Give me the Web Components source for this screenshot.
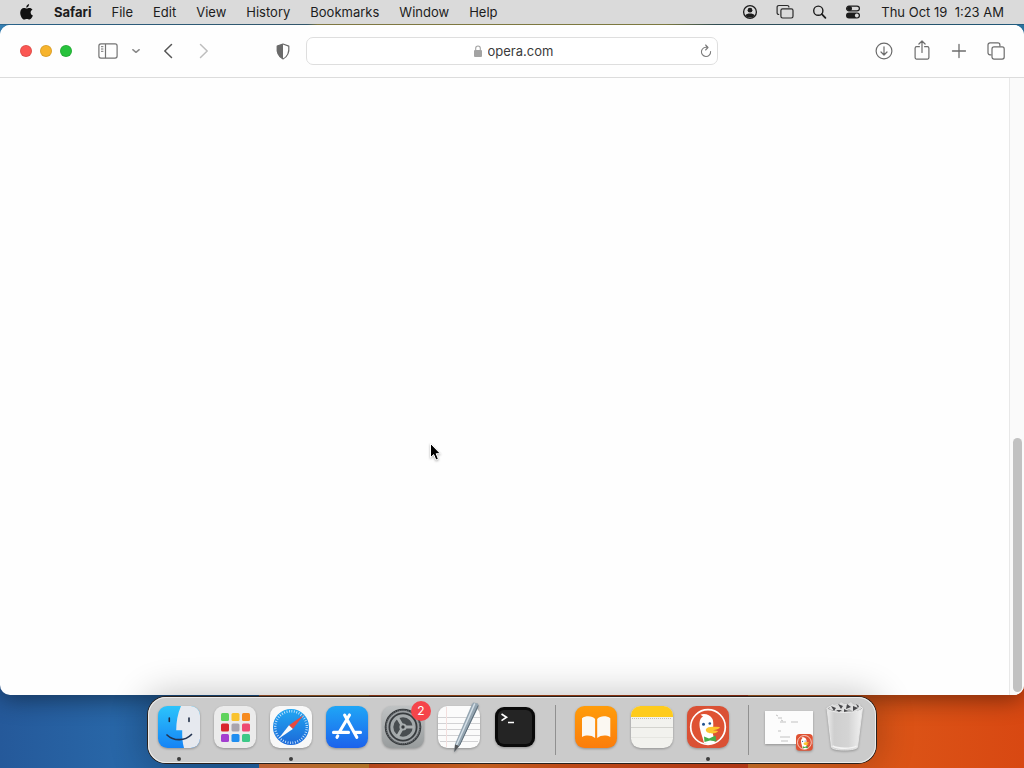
<!DOCTYPE html>
<html lang="en">
<head>
<meta charset="utf-8">
<title>Desktop</title>
<style>
html, body { margin: 0; height: 100%; }
body { font-family: Inter, "Liberation Sans", sans-serif; font-size: 13px; line-height: 16px; color: #1c1c1c; overflow: hidden; }
</style>
</head>
<body>
<mac-desktop>
  <mac-menubar slot="menu"></mac-menubar>
  <browser-window slot="window" address="opera.com"></browser-window>
  <mac-dock slot="dock"></mac-dock>
</mac-desktop>

<script>
function define(name, html, setup) {
  const template = document.createElement('template');
  template.innerHTML = html;
  customElements.define(name, class extends HTMLElement {
    constructor() {
      super();
      this.attachShadow({ mode: 'open' }).append(template.content.cloneNode(true));
    }
    connectedCallback() { if (setup) setup(this, this.shadowRoot); }
  });
}

const button = `button { all: unset; display: flex; align-items: center; justify-content: center; flex: none; }
svg { display: block; flex: none; overflow: visible; }`;

define('mac-desktop', `
<style>
:host {
  display: flex; flex-direction: column; height: 100vh; position: relative; overflow: hidden;
  background:
    linear-gradient(90deg, #3c8cc4 0, #4a7f9c 30%, #b9ae62 31%, #b5b15c 65%, #47707a 70%, #2f7fb0 100%) top / 100% 60px no-repeat,
    linear-gradient(90deg, #25599a 0, #2866a7 11%, #22609f 22%, #2364a6 25.3%, #d8703c 25.3%, #c8822c 36%, #cd5020 36%, #dc6c24 47%, #d8551c 55%, #c63e18 73%, #d27428 73%, #df6520 79%, #dc5517 86%, #d84812 100%);
}
.cursor { position: absolute; left: 429px; top: 442px; z-index: 2; filter: drop-shadow(0 1px 1px rgba(0,0,0,.3)); }
</style>
<slot name="menu"></slot>
<slot name="window"></slot>
<slot name="dock"></slot>
<svg class="cursor" width="13" height="20" viewBox="0 0 13 20" aria-hidden="true"><path d="M1.5 1.5V15.6L4.7 12.6L6.9 18L9.4 17L7.2 11.7H11.4Z" fill="#000" stroke="#fff" stroke-width="1"/></svg>
`);

define('menu-item', `
<style>
:host { display: block; }
${button}
button { height: 24px; }
:host([strong]) button { font-weight: 700; }
</style>
<button><slot></slot></button>
`);

define('mac-menubar', `
<style>
:host { display: flex; justify-content: space-between; align-items: center; flex: none; height: 24px; padding: 0 20px; background: #dadada; box-shadow: 0 1px rgba(0,0,0,.18); z-index: 1; }
nav, .status { display: flex; align-items: center; }
nav { gap: 20px; }
.status { gap: 18px; }
${button}
time { white-space: pre; padding-left: 2px; }
</style>
<nav aria-label="Menu">
  <button aria-label="Apple"><svg width="14" height="16" viewBox="0 0 14 16"><path fill="#111" d="M9.1.1C9.2 1.9 7.9 3.6 6.3 3.7 6.1 2 7.5.3 9.1.1ZM6.7 4.6C7.4 4.6 8.3 3.9 9.5 3.9 10.7 3.9 11.8 4.5 12.5 5.4 9.8 7 10.2 10.4 12.9 11.5 12.3 13.2 11 15.4 9.6 15.5 8.6 15.6 8.2 14.9 6.9 14.9 5.6 14.9 5.2 15.5 4.2 15.6 2.5 15.6.2 11.9.2 8.7.2 5.6 2.1 4 3.9 4 5.2 4 6.1 4.6 6.7 4.6Z"/></svg></button>
  <menu-item strong>Safari</menu-item>
  <menu-item>File</menu-item>
  <menu-item>Edit</menu-item>
  <menu-item>View</menu-item>
  <menu-item>History</menu-item>
  <menu-item>Bookmarks</menu-item>
  <menu-item>Window</menu-item>
  <menu-item>Help</menu-item>
</nav>
<div class="status">
  <button aria-label="User"><svg width="16" height="16" viewBox="0 0 16 16"><circle cx="8" cy="8" r="6.4" fill="none" stroke="#1c1c1c" stroke-width="1.3"/><circle cx="8" cy="6.2" r="2.4" fill="#1c1c1c"/><path d="M3.4 11.4C4.6 9 11.4 9 12.6 11.4 10.4 14.3 5.6 14.3 3.4 11.4Z" fill="#1c1c1c"/></svg></button>
  <button aria-label="Stage Manager"><svg width="18" height="16" viewBox="0 0 18 16" fill="none" stroke="#2c2c2c" stroke-width="1.2"><path d="M3.2 10.5H2.8A1.7 1.7 0 0 1 1.1 8.8V3.2A1.7 1.7 0 0 1 2.8 1.500H11.2A1.7 1.7 0 0 1 12.900 3.200V3.400"/><rect x="4.9" y="4.9" width="12.1" height="9.1" rx="1.7"/></svg></button>
  <button aria-label="Search"><svg width="15" height="16" viewBox="0 0 15 16" fill="none" stroke="#1c1c1c" stroke-width="1.4" stroke-linecap="round"><circle cx="6.3" cy="6.7" r="4.6"/><path d="M9.8 10.2L13.4 13.8" stroke-width="1.8"/></svg></button>
  <button aria-label="Control Center"><svg width="16" height="16" viewBox="0 0 16 16"><rect x="1.6" y="2.1" width="12.8" height="4.8" rx="2.4" fill="none" stroke="#1c1c1c" stroke-width="1.2"/><circle cx="4.5" cy="4.5" r="2.5" fill="#1c1c1c"/><rect x="1" y="8.5" width="14" height="6" rx="3" fill="#1c1c1c"/><circle cx="11.8" cy="11.5" r="1.9" fill="#dadada"/></svg></button>
  <time datetime="01:23">Thu Oct 19  1:23 AM</time>
</div>
`);

define('browser-toolbar', `
<style>
:host { display: grid; grid-template-columns: 1fr minmax(0, 412px) 1fr; align-items: center; flex: none; height: 52px; border-bottom: 1px solid #dcdcdc; background: #fefefe; }
${button}
.left, .lights, .nav, .right { display: flex; align-items: center; }
.left { padding: 0 16px 0 20px; }
.lights { gap: 8px; }
.lights button { width: 10px; height: 10px; border-radius: 50%; border: 1px solid rgba(0,0,0,.1); }
.red { background: #fb5753; } .yellow { background: #f7b42d; } .green { background: #27c23c; }
.nav { gap: 13px; margin-left: 26px; }
.back { margin-left: 9px; }
.forward { margin-left: 13px; }
.shield { margin-left: auto; }
form { display: flex; align-items: center; box-sizing: border-box; height: 28px; padding: 0 5px; border: 1px solid #dedede; border-radius: 7px; background: #fff; }
label { display: flex; align-items: center; gap: 6px; margin: 0 auto; padding-left: 15px; }
input { all: unset; width: 66px; field-sizing: content; color: #3b3b3b; font: inherit; }
.right { justify-content: flex-end; gap: 19px; padding-right: 18px; }
</style>
<div class="left">
  <div class="lights"><button class="red" aria-label="Close"></button><button class="yellow" aria-label="Minimize"></button><button class="green" aria-label="Zoom"></button></div>
  <div class="nav">
    <button aria-label="Sidebar"><svg width="20" height="16" viewBox="0 0 20 16" fill="none" stroke="#737373" stroke-width="1.2"><rect x=".9" y=".9" width="18.2" height="14.2" rx="2"/><path d="M7.5 1V15"/><path d="M3 3.7H5.4M3 6H5.4M3 8.3H5.4" stroke-width="1"/></svg></button>
    <button aria-label="Tab groups"><svg width="10" height="6" viewBox="0 0 10 6" fill="none" stroke="#8a8a8a" stroke-width="1.5" stroke-linecap="round" stroke-linejoin="round"><path d="M1.8 1.7L5 4.3L8.2 1.7"/></svg></button>
    <button class="back" aria-label="Back"><svg width="10" height="16" viewBox="0 0 10 16" fill="none" stroke="#555" stroke-width="1.5" stroke-linecap="round" stroke-linejoin="round"><path d="M8.5 1.5L1.8 8L8.5 14.5"/></svg></button>
    <button class="forward" aria-label="Forward"><svg width="10" height="16" viewBox="0 0 10 16" fill="none" stroke="#bdbdbd" stroke-width="1.5" stroke-linecap="round" stroke-linejoin="round"><path d="M1.5 1.5L8.2 8L1.5 14.5"/></svg></button>
  </div>
  <button class="shield" aria-label="Privacy report"><svg width="14" height="17" viewBox="0 0 14 17"><path d="M7 1L12.8 3.1C13.4 8.8 12.6 13.2 7 16 1.4 13.2.6 8.8 1.2 3.1Z" fill="none" stroke="#6a6a6a" stroke-width="1.2" stroke-linejoin="round"/><path d="M7 1L1.2 3.1C.6 8.8 1.4 13.2 7 16Z" fill="#6a6a6a"/></svg></button>
</div>
<form>
  <label><svg width="8" height="12" viewBox="0 0 8 12" aria-hidden="true"><rect y="5" width="8" height="7" rx="1" fill="#a3a3a3"/><path d="M1.7 5.5V3.3A2.3 2.3 0 0 1 6.3 3.3V5.5" fill="none" stroke="#a3a3a3" stroke-width="1.1"/></svg><input type="text" aria-label="Address" spellcheck="false"></label>
  <button type="button" aria-label="Reload"><svg width="12" height="14" viewBox="0 0 12 14" fill="none" stroke="#7c7c7c" stroke-width="1.1" stroke-linecap="round" stroke-linejoin="round"><path d="M7.500 3.500A4.600 4.600 0 1 0 10.600 7.500M5.600 1L8 3.500L5.600 6"/></svg></button>
</form>
<div class="right">
  <button aria-label="Downloads"><svg width="18" height="18" viewBox="0 0 18 18" fill="none" stroke="#6c6c6c" stroke-width="1.2" stroke-linecap="round" stroke-linejoin="round"><circle cx="9" cy="9" r="7.9"/><path d="M9 4.8V12.8M6 10L9 13L12 10"/></svg></button>
  <button aria-label="Share"><svg width="20" height="20" viewBox="0 0 20 20" fill="none" stroke="#6c6c6c" stroke-width="1.2" stroke-linecap="round" stroke-linejoin="round"><path d="M7.400 5.700H4.600A1.500 1.500 0 0 0 3.100 7.200V16.600A1.500 1.500 0 0 0 4.600 18.100H15.400A1.500 1.500 0 0 0 16.900 16.600V7.200A1.500 1.500 0 0 0 15.400 5.700H12.600M10 11.500V0M6.900 3L10 0L13.100 3"/></svg></button>
  <button aria-label="New tab"><svg width="16" height="16" viewBox="0 0 16 16" stroke="#6c6c6c" stroke-width="1.3" stroke-linecap="round"><path d="M8 1.500V14.500M1.500 8H14.500"/></svg></button>
  <button aria-label="Tab overview"><svg width="20" height="18" viewBox="0 0 20 18" fill="none" stroke="#6c6c6c" stroke-width="1.2"><path d="M5.500 12.800H4A2 2 0 0 1 2 10.800V2.900A2 2 0 0 1 4 .9H11.900A2 2 0 0 1 13.900 2.900V4.400"/><rect x="6" y="4.900" width="12.200" height="12.200" rx="2"/></svg></button>
</div>
`);

define('browser-window', `
<style>
:host { display: flex; flex-direction: column; flex: 1; min-height: 0; margin-top: 1px; border-radius: 10px; overflow: hidden; background: #fefefe; box-shadow: 0 4px 24px rgba(0,0,0,.45); }
main { flex: 1; display: flex; justify-content: flex-end; min-height: 0; }
.track { box-sizing: border-box; width: 15px; padding: 0 2px 3px 3px; background: #fafafa; border-left: 1px solid #e8e8e8; display: flex; flex-direction: column; justify-content: flex-end; }
.thumb { height: 41.3%; border-radius: 5px; background: #c1c1c1; }
</style>
<browser-toolbar></browser-toolbar>
<main><div class="track"><div class="thumb"></div></div></main>
`, (host, root) => {
  const bar = root.querySelector('browser-toolbar');
  bar.shadowRoot.querySelector('input').value = host.getAttribute('address');
});

define('dock-app', `
<style>
:host { display: flex; position: relative; flex: none; width: 42px; height: 42px; }
${button}
button { width: 42px; height: 42px; filter: drop-shadow(0 1px 1px rgba(0,0,0,.28)); }
::slotted(svg) { display: block; flex: none; overflow: visible; }
.dot { display: none; position: absolute; left: 19px; bottom: -13px; width: 4px; height: 4px; border-radius: 50%; background: #3d3d3d; }
:host([running]) .dot { display: block; }
.badge { position: absolute; top: -5px; right: -7px; width: 20px; height: 20px; border-radius: 50%; background: #f5454a; color: #fff; font-size: 12px; line-height: 20px; text-align: center; }
.badge:empty { display: none; }
</style>
<button><slot></slot></button><span class="dot"></span><span class="badge"></span>
`, (host, root) => {
  root.querySelector('button').setAttribute('aria-label', host.getAttribute('name'));
  root.querySelector('.badge').textContent = host.getAttribute('badge') || '';
});

const keys = ['#5fd35c', '#f9c22e', '#f58a1f', '#d9262c', '#a9a4ad', '#ee4a72', '#a33fd0', '#1f8ef0', '#3cc987']
  .map((c, i) => `<rect x="${7 + i % 3 * 10.5}" y="${7 + Math.floor(i / 3) * 10.5}" width="8" height="8" rx="1.5" fill="${c}"/>`).join('');
const duck = `<circle cx="21" cy="21" r="17.3" fill="#df5233" stroke="#fff" stroke-width="1.7"/>
<path d="M17 37C15.500 30 12 23 12.500 17 12.800 13.500 14 11.500 16 10.500L13.500 8.800C17 7 23 8.300 25.500 13 27 17 26 23 25.700 27L28 36.500C24 38.700 20 38.500 17 37Z" fill="#fff"/>
<circle cx="16.500" cy="18.300" r="1.500" fill="#23538e"/><circle cx="22.800" cy="17.500" r="1.300" fill="#23538e"/>
<path d="M18.800 23.500C20 20 26 20.500 32.500 21 34 22 29 24 26 24.300 29 24.800 31 24.500 31 25.500 28 28.500 18.500 28 18.800 23.500Z" fill="#fdc62e"/>
<path d="M17 30.500L22 32.500 28.500 29.500 29.500 35.500 23 34.500 17.500 36Z" fill="#46ad48"/>`;

define('mac-dock', `
<style>
:host { display: flex; flex: none; align-self: center; box-sizing: border-box; gap: 14px; height: 66px; margin: 2px 0 5px; padding: 9px 10px; border-radius: 18px; background: #cbcbcb; box-shadow: inset 0 0 0 1px #ececec, 0 0 0 1px #29221e, 0 0 36px 3px rgba(0,0,0,.24); z-index: 1; }
.divider { flex: none; width: 1px; height: 50px; margin: -1px 5px; background: #909090; }
</style>
<dock-app name="Finder" running><svg width="42" height="42" viewBox="0 0 42 42">
  <defs><clipPath id="tile"><rect width="42" height="42" rx="9.5"/></clipPath>
  <linearGradient id="finder" x2="0" y2="1"><stop stop-color="#2cc4fb"/><stop offset="1" stop-color="#1583f5"/></linearGradient></defs>
  <g clip-path="url(#tile)"><path fill="url(#finder)" d="M0 0H42V42H0Z"/><path d="M23 0C19.5 8 18.3 16 18.2 24.2H24.2C24 31 24.5 37 26 42H42V0Z" fill="#e6e9ef"/></g>
  <path d="M11.3 12V15.5M31 12V15.5" stroke="#1f2c45" stroke-width="1.6" stroke-linecap="round"/><path d="M9 29C16 35.5 27 35.2 33.5 28.5" fill="none" stroke="#233350" stroke-width="1.7" stroke-linecap="round"/></svg></dock-app>
<dock-app name="Launchpad"><svg width="42" height="42" viewBox="0 0 42 42"><rect width="42" height="42" rx="9.5" fill="#ebebeb"/>${keys}</svg></dock-app>
<dock-app name="Safari" running><svg width="42" height="42" viewBox="0 0 42 42">
  <defs><linearGradient id="compass" x2="0" y2="1"><stop stop-color="#22a7f2"/><stop offset="1" stop-color="#1c68d8"/></linearGradient></defs>
  <rect width="42" height="42" rx="9.5" fill="#f8f8f8"/><circle cx="21" cy="21" r="18" fill="url(#compass)"/><circle cx="21" cy="21" r="15.8" fill="none" stroke="#d4eaff" stroke-width="2.4" stroke-dasharray=".8 1.682"/>
  <path d="M33.7 9L22.8 23 19 19.2Z" fill="#e8493f"/><path d="M8.3 33L19 19.2 22.8 23Z" fill="#f8fafc"/></svg></dock-app>
<dock-app name="App Store"><svg width="42" height="42" viewBox="0 0 42 42">
  <defs><linearGradient id="store" x2="0" y2="1"><stop stop-color="#1fa6f6"/><stop offset="1" stop-color="#1c62ec"/></linearGradient></defs>
  <rect width="42" height="42" rx="9.5" fill="url(#store)"/><path d="M18.6 9L30.8 31.3M23.5 9L13.4 26M11.8 29.8L11 31.3M7.5 26.400H22.500M28.500 26.400H34.500" fill="none" stroke="#fff" stroke-width="3.1" stroke-linecap="round"/></svg></dock-app>
<dock-app name="System Settings" badge="2"><svg width="42" height="42" viewBox="0 0 42 42">
  <defs><linearGradient id="metal" x2="0" y2="1"><stop stop-color="#bfc2c3"/><stop offset="1" stop-color="#989c9d"/></linearGradient></defs>
  <rect width="42" height="42" rx="9.5" fill="url(#metal)"/><circle cx="21" cy="21" r="18.3" fill="#373b3e"/><circle cx="21" cy="21" r="15.4" fill="none" stroke="#999da0" stroke-width="1.8"/><circle cx="21" cy="21" r="16.8" fill="none" stroke="#7d8184" stroke-width="1" stroke-dasharray="1.1 1.1"/><circle cx="21" cy="21" r="11.2" fill="#484d50" stroke="#a3a8aa" stroke-width="3"/><path d="M21 21H32M21 21L15.500 11.500M21 21L15.500 30.500" stroke="#abb0b1" stroke-width="3"/><circle cx="21" cy="21" r="3.600" fill="#a9aeaf"/><circle cx="21" cy="21" r="1.700" fill="#373b3e"/></svg></dock-app>
<dock-app name="TextEdit"><svg width="42" height="42" viewBox="0 0 42 42">
  <rect width="42" height="42" rx="9.5" fill="#fbfbfb"/><path d="M0 11.5H42M0 17.5H42M0 23.5H42M0 29.5H42M2 35.5H40" stroke="#d2d2d4"/><path d="M8.5 1V41" stroke="#f3dfde"/>
  <path d="M35.5-3.5L39.8-2.5C40.8-1.5 40.3 1 39.5 3L21.5 40 16.3 46 17 38 33.8-1.5Z" fill="#94a5b1"/><path d="M36.8-2.5L18.6 39" stroke="#d5e0e8" stroke-width="1.5"/><path d="M40.2-.5L21.5 39.5" stroke="#5c6c78"/><path d="M17 38.5L21.2 40 16.3 46Z" fill="#55575a"/></svg></dock-app>
<dock-app name="Terminal"><svg width="42" height="42" viewBox="0 0 42 42">
  <rect x="1" y="1" width="40" height="40" rx="9" fill="#0a0a0a"/><rect x="4" y="4" width="34" height="34" rx="6" fill="#242424"/><path d="M7.5 8L12.500 11.300L7.500 14.600M14 16.500H20" fill="none" stroke="#fff" stroke-width="1.700"/></svg></dock-app>
<span class="divider"></span>
<dock-app name="Books"><svg width="42" height="42" viewBox="0 0 42 42">
  <defs><linearGradient id="books" x2="0" y2="1"><stop stop-color="#ff9c0a"/><stop offset="1" stop-color="#fb7d0c"/></linearGradient></defs>
  <rect width="42" height="42" rx="9.5" fill="url(#books)"/><path d="M20.100 13C17.500 9.700 10.500 9.500 7 12.300V31C11 28.800 16.500 29 20.100 32ZM22.200 13C24.800 9.700 31.800 9.500 35.300 12.300V31C31.300 28.800 25.800 29 22.200 32Z" fill="#fbf8f2"/></svg></dock-app>
<dock-app name="Notes"><svg width="42" height="42" viewBox="0 0 42 42">
  <rect width="42" height="42" rx="9.5" fill="#f2f2ee"/><path d="M0 11V9.5A9.5 9.5 0 0 1 9.5 0H32.5A9.5 9.5 0 0 1 42 9.5V11Z" fill="#fecb1c"/><path d="M1 12.5H41" stroke="#c2c0b6" stroke-dasharray="1 1"/><path d="M0 21.5H42" stroke="#d3d3ce"/><path d="M0 31.5H42" stroke="#e6e6e1"/></svg></dock-app>
<dock-app name="DuckDuckGo" running><svg width="42" height="42" viewBox="0 0 42 42"><rect width="42" height="42" rx="9.5" fill="#da5135"/>${duck}</svg></dock-app>
<span class="divider"></span>
<dock-app name="Minimized window"><svg width="50" height="42" viewBox="0 0 50 42">
  <rect x="1" y="5" width="48" height="33" fill="#fcfcfc"/><path d="M12 9L14 10M14 12H18M17 14L19 15M16 16H22M27 16H34M14 25H17M16 31H26M17 35H24" stroke="#c2c2c2" stroke-width="1"/>
  <g transform="translate(32 28) scale(.4)"><rect width="42" height="42" rx="9" fill="#df5233"/>${duck}</g></svg></dock-app>
<dock-app name="Trash"><svg width="42" height="48" viewBox="0 0 42 48">
  <defs><linearGradient id="bin"><stop stop-color="#ebebeb"/><stop offset=".2" stop-color="#cfcfcf"/><stop offset=".6" stop-color="#d4d4d4"/><stop offset="1" stop-color="#f2f2f2"/></linearGradient></defs>
  <path d="M3 5L7.500 44C8 48 33 48 33.500 44L38.500 5Z" fill="url(#bin)" stroke="#e6e6e6"/><ellipse cx="20.800" cy="5.500" rx="17.500" ry="4" fill="#aaa" stroke="#ececec"/>
  <path d="M5 6L8 1 13 3 17-1 22 2 27-1 31 3 36 1 37 6 30 9 25 6 20 9 12 8Z" fill="#dedede"/><path d="M7 3L12 5 10 8ZM14 1L19 3 17 6ZM23 1L27 4 22 6ZM29 3L34 5 29 8ZM12 7L18 7 15 9ZM32 1L35 3 34 5ZM20 6L24 8 20 9Z" fill="#48484b"/><path d="M8.500 43C14 46 28 46 32.500 43" fill="none" stroke="#f4f4f4" stroke-width="1.500"/></svg></dock-app>
`);
</script>
</body>
</html>
